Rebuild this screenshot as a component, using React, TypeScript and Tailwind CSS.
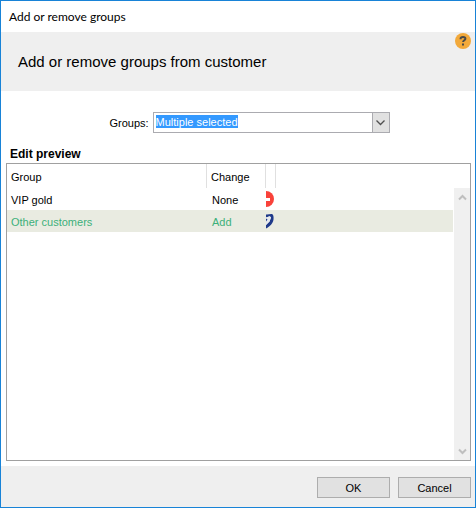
import React from "react";

type Change = "None" | "Add";

const rows: { group: string; change: Change }[] = [
  { group: "VIP gold", change: "None" },
  { group: "Other customers", change: "Add" },
];

function HelpIcon() {
  return (
    <svg viewBox="0 0 16 16" className="block size-4" aria-hidden="true">
      <circle cx="8" cy="8" r="8" fill="#f2a93b" />
      <path d="M5.6 6.3V5.6C5.6 4.5 6.6 3.900 8 3.900s2.400.7 2.400 1.800c0 1.600-2.300 1.500-2.300 3.300" fill="none" stroke="#4a4a48" strokeWidth="2" />
      <rect x="7" y="10.500" width="2" height="2" fill="#4a4a48" />
    </svg>
  );
}

function RemoveIcon() {
  return (
    <svg viewBox="0 0 8 16" className="block h-4 w-2" aria-hidden="true">
      <circle cx="0" cy="8" r="8" fill="#f9423a" />
      <rect x="0" y="7" width="4" height="3" fill="#fff" />
    </svg>
  );
}

function AddIcon() {
  return (
    <svg viewBox="0 0 8 16" className="block h-4 w-2" aria-hidden="true">
      <path
        d="M0 1.500C2 1.800 4 .8 6 1C7.500 1.800 7.800 4 7.500 6.500C7 10.500 4 13.500 0 15.500V12L3.500 8.500L5 4.500L3.800 3.200L0 4.500Z"
        fill="#1f3a8a"
      />
      <path d="M0 4.500L3.800 3.200L5 4.500L3.500 8.500L0 12Z" fill="#e6e9ee" />
      <path d="M0 5.500L1.500 6.500L0 8.500Z" fill="#1f3a8a" />
    </svg>
  );
}

function Chevron({ up = false, className }: { up?: boolean; className: string }) {
  return (
    <svg viewBox="0 0 9 7" className={className} aria-hidden="true">
      <path d={up ? "M1 5.500L4.500 2L8 5.500" : "M1 1.500L4.500 5L8 1.500"} fill="none" stroke="currentColor" strokeWidth="2" />
    </svg>
  );
}

export default function App() {
  return (
    <div className="flex min-h-screen flex-col border border-[#1883d7] bg-white font-['Liberation_Sans',Arial,sans-serif] text-[11px] leading-4 text-black">
      <div className="flex h-[31px] items-center px-2 font-[Lato,'Open_Sans',sans-serif] text-[12px]">
        Add or remove groups
      </div>

      <header className="flex h-[59px] items-start justify-between bg-[#efefef] pr-1 pl-[17px]">
        <h1 className="self-center text-[15px] leading-5">Add or remove groups from customer</h1>
        <button type="button" aria-label="Help" className="mt-px">
          <HelpIcon />
        </button>
      </header>

      <main className="flex flex-1 flex-col pt-[21px] pr-1 pb-[5px] pl-[5px]">
        <div className="flex items-center justify-center gap-1 pl-[22px]">
          <label htmlFor="groups">Groups:</label>
          <div className="relative w-[237px]">
            <select
              id="groups"
              defaultValue="multiple"
              className="block h-[21px] w-full appearance-none border border-[#ababb0] bg-white bg-[linear-gradient(#3399ff,#3399ff)] bg-[length:82px_13px] bg-[position:2px_2px] bg-no-repeat pr-5 pb-0.5 pl-0.5 text-white"
            >
              <option value="multiple">Multiple selected</option>
            </select>
            <span className="pointer-events-none absolute top-0 right-0 flex h-[21px] w-[18px] items-center justify-center border border-[#ababb0] bg-[#e1e1e1] text-[#505050]">
              <svg viewBox="0 0 9 6" className="h-1.5 w-[9px]" aria-hidden="true">
                <path d="M.5.5L4.500 4.500L8.500.5" fill="none" stroke="currentColor" strokeWidth="1.300" />
              </svg>
            </span>
          </div>
        </div>

        <h2 className="mt-[13px] mb-px px-1 text-[12px] leading-4 font-bold">Edit preview</h2>

        <div className="flex flex-1 border border-[#a0a0a0]">
          <div className="min-w-0 flex-1">
            <table className="w-full table-fixed border-separate border-spacing-0 text-left">
              <colgroup>
                <col className="w-[200px]" />
                <col className="w-[59px]" />
                <col className="w-[10px]" />
                <col />
              </colgroup>
              <thead>
                <tr className="h-6">
                  <th className="border-r border-[#e0e0e0] px-1 pt-0.5 font-normal">Group</th>
                  <th className="border-r border-[#e0e0e0] px-1 pt-0.5 font-normal">Change</th>
                  <th className="border-r border-[#e0e0e0] p-0" />
                  <th className="p-0" />
                </tr>
              </thead>
              <tbody>
                {rows.map((row) => (
                  <tr key={row.group} className={row.change === "Add" ? "h-[22px] bg-[#e9ebe1] text-[#3cb07a]" : "h-[22px]"}>
                    <td className="px-1 pt-0.5">{row.group}</td>
                    <td className="px-[5px] pt-0.5">{row.change}</td>
                    <td className="p-0">{row.change === "Add" ? <AddIcon /> : <RemoveIcon />}</td>
                    <td className="p-0" />
                  </tr>
                ))}
              </tbody>
            </table>
          </div>
          <div className="mt-6 ml-px flex w-4 flex-col items-center justify-between bg-[#f0f0f0] text-[#bfbfbf]">
            <button type="button" aria-label="Scroll up" className="flex h-[18px] w-full items-center justify-center">
              <Chevron up className="h-[7px] w-[9px]" />
            </button>
            <button type="button" aria-label="Scroll down" className="flex h-[18px] w-full items-center justify-center">
              <Chevron className="h-[7px] w-[9px]" />
            </button>
          </div>
        </div>
      </main>

      <footer className="flex h-[41px] items-center justify-end gap-2 bg-[#efefef] pt-0.5 pr-1">
        <button type="button" className="h-[21px] w-[73px] border border-[#adadad] bg-[#e1e1e1]">OK</button>
        <button type="button" className="h-[21px] w-[73px] border border-[#adadad] bg-[#e1e1e1]">Cancel</button>
      </footer>
    </div>
  );
}
